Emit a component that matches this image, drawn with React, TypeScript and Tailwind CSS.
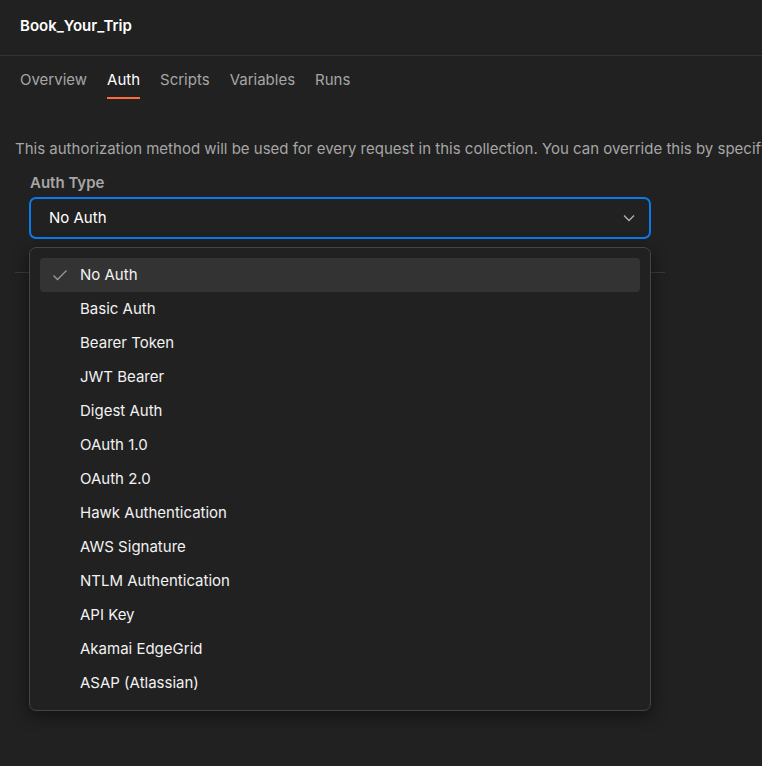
import React from "react";

const items = [
  "No Auth",
  "Basic Auth",
  "Bearer Token",
  "JWT Bearer",
  "Digest Auth",
  "OAuth 1.0",
  "OAuth 2.0",
  "Hawk Authentication",
  "AWS Signature",
  "NTLM Authentication",
  "API Key",
  "Akamai EdgeGrid",
  "ASAP (Atlassian)",
];

export default function App() {
  return (
    <div
      className="w-[762px] h-[766px] overflow-hidden bg-[#212121] text-[15px] text-white"
      style={{ fontFamily: "Inter, 'Noto Sans', sans-serif" }}
    >
      <div className="h-[56px] border-b border-[#333333] flex items-center px-5 pb-[2px]">
        <span className="font-semibold text-[15px] text-white">Book_Your_Trip</span>
      </div>
      <div className="flex gap-5 px-5 h-[43px]">
        {["Overview", "Auth", "Scripts", "Variables", "Runs"].map((t) => (
          <div key={t} className="relative flex items-center pt-[5px]">
            <span className={t === "Auth" ? "text-white" : "text-[#a6a6a6]"}>{t}</span>
            {t === "Auth" && (
              <div className="absolute left-0 right-0 bottom-[0px] h-[2px] bg-[#ff6c37]" />
            )}
          </div>
        ))}
      </div>
      <div className="pl-[15px] pt-[39px] whitespace-nowrap text-[#a6a6a6] leading-[22px]">
        This authorization method will be used for every request in this collection. You can override this by specifying one in the request.
      </div>
      <div className="pl-[30px] pt-[12px] text-[#a6a6a6] font-semibold leading-[22px]">Auth Type</div>
      <div className="relative pl-[29px] pt-[3px]">
        <div className="w-[622px] h-[42px] rounded-[7px] border-2 border-[#097bed] flex items-center justify-between pl-[18px] pr-[12px]">
          <span className="text-white">No Auth</span>
          <svg width="16" height="16" viewBox="0 0 16 16" fill="none" stroke="#b3b3b3" strokeWidth="1.3">
            <path d="M3 5.5 L8 10.5 L13 5.5" />
          </svg>
        </div>
        <div className="ml-[-14px] mt-[33px] w-[650px] border-b border-[#3a3a3a]" />
        <div className="absolute left-[29px] top-[53px] w-[622px] rounded-[7px] border border-[#444444] bg-[#212121] p-[10px] shadow-[0_4px_16px_rgba(0,0,0,0.5)]">
          {items.map((it, i) => (
            <div
              key={it}
              className={`h-[34px] flex items-center rounded-[4px] ${i === 0 ? "bg-[#333333]" : ""}`}
            >
              <div className="w-[40px] flex items-center justify-center">
                {i === 0 && (
                  <svg width="18" height="18" viewBox="0 0 18 18" fill="none" stroke="#9a9a9a" strokeWidth="1.3">
                    <path d="M2.5 9.5 L6.5 13.5 L15.5 4.5" />
                  </svg>
                )}
              </div>
              <span className="text-[#f2f2f2]">{it}</span>
            </div>
          ))}
        </div>
      </div>
    </div>
  );
}
